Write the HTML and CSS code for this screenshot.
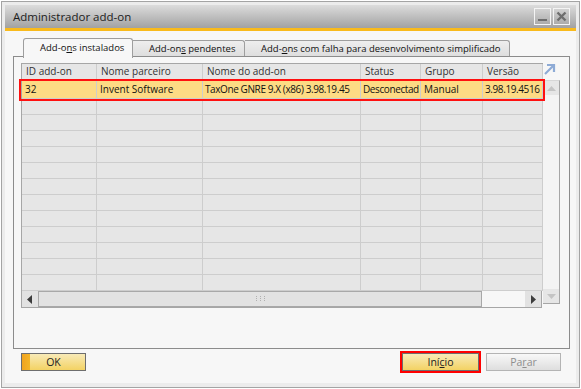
FILE: index.html
```html
<!DOCTYPE html>
<html lang="pt">
<head>
    <meta charset="UTF-8">
    <title>Administrador add-on</title>
    <link rel="stylesheet" href="styles.css">
</head>
<body>
    <div class="window">
        <div class="titlebar">
            <span class="title">Administrador add-on</span>
            <div class="win_btns">
                <span class="win_btn">
                    <svg width="15" height="15" viewBox="0 0 15 15"><rect x="3" y="10" width="9" height="2" fill="#6e6e6e"/></svg>
                </span>
                <span class="win_btn">
                    <svg width="15" height="15" viewBox="0 0 15 15"><path d="M3.5 3.5 L11.5 11.5 M11.5 3.5 L3.5 11.5" stroke="#6e6e6e" stroke-width="2.4"/></svg>
                </span>
            </div>
        </div>
        <div class="accent"></div>

        <div class="client">
            <div class="tabs">
                <div class="tab active tab_1">Add-o<u>n</u>s instalados</div>
                <div class="tab tab_2">Add-on<u>s</u> pendentes</div>
                <div class="tab tab_3">Add-<u>o</u>ns com falha para desenvolvimento simplificado</div>
            </div>

            <div class="panel">
                <div class="grid_box">
                    <div class="grid_left">
                        <div class="grid">
                            <div class="row head">
                                <span>ID add-on</span><span>Nome parceiro</span><span>Nome do add-on</span><span>Status</span><span>Grupo</span><span>Versão</span>
                            </div>
                            <div class="row first selected">
                                <span>32</span><span>Invent Software</span><span class="tight">TaxOne GNRE 9.X (x86) 3.98.19.45</span><span class="tight">Desconectad</span><span>Manual</span><span class="tight">3.98.19.4516</span>
                            </div>
                            <div class="row"><span></span><span></span><span></span><span></span><span></span><span></span></div>
                            <div class="row"><span></span><span></span><span></span><span></span><span></span><span></span></div>
                            <div class="row"><span></span><span></span><span></span><span></span><span></span><span></span></div>
                            <div class="row"><span></span><span></span><span></span><span></span><span></span><span></span></div>
                            <div class="row"><span></span><span></span><span></span><span></span><span></span><span></span></div>
                            <div class="row"><span></span><span></span><span></span><span></span><span></span><span></span></div>
                            <div class="row"><span></span><span></span><span></span><span></span><span></span><span></span></div>
                            <div class="row"><span></span><span></span><span></span><span></span><span></span><span></span></div>
                            <div class="row"><span></span><span></span><span></span><span></span><span></span><span></span></div>
                            <div class="row"><span></span><span></span><span></span><span></span><span></span><span></span></div>
                            <div class="row"><span></span><span></span><span></span><span></span><span></span><span></span></div>
                            <div class="row"><span></span><span></span><span></span><span></span><span></span><span></span></div>
                            <div class="mark"></div>
                        </div>
                        <div class="hscroll">
                            <span class="sb_btn"><svg width="6" height="9" viewBox="0 0 6 9"><path d="M5 0 L0 4.5 L5 9 Z" fill="#3c3c3c"/></svg></span>
                            <span class="hthumb">
                                <svg width="9" height="6" viewBox="0 0 9 6" class="grip"><g fill="#b0b0b0"><rect x="0" y="0" width="1" height="1"/><rect x="4" y="0" width="1" height="1"/><rect x="8" y="0" width="1" height="1"/><rect x="0" y="2" width="1" height="1"/><rect x="4" y="2" width="1" height="1"/><rect x="8" y="2" width="1" height="1"/><rect x="0" y="4" width="1" height="1"/><rect x="4" y="4" width="1" height="1"/><rect x="8" y="4" width="1" height="1"/></g></svg>
                            </span>
                            <span class="htrack"></span>
                            <span class="sb_btn"><svg width="6" height="9" viewBox="0 0 6 9"><path d="M1 0 L6 4.5 L1 9 Z" fill="#3c3c3c"/></svg></span>
                        </div>
                    </div>
                    <div class="grid_right">
                        <div class="corner">
                            <svg width="13" height="13" viewBox="0 0 13 13"><path d="M2 11 L11 2 M4 2 H11 V9" fill="none" stroke="#8eabd6" stroke-width="2.2"/></svg>
                        </div>
                        <div class="vscroll">
                            <span class="sb_btn v"><svg width="9" height="5" viewBox="0 0 9 5"><path d="M0 5 L4.5 0 L9 5 Z" fill="#c4c4c4"/></svg></span>
                            <span class="vtrack"></span>
                            <span class="sb_btn v"><svg width="9" height="5" viewBox="0 0 9 5"><path d="M0 0 L4.5 5 L9 0 Z" fill="#c4c4c4"/></svg></span>
                        </div>
                    </div>
                </div>
            </div>

            <div class="actions">
                <button class="btn btn_ok">OK</button>
                <span class="spacer"></span>
                <button class="btn btn_start">Iní<u>c</u>io</button>
                <button class="btn btn_off">Pa<u>r</u>ar</button>
            </div>
        </div>
    </div>
</body>
</html>
```

FILE: styles.css
```css
body {
    margin: 0;
    padding: 1px;
    background: #ffffff;
    font-family: "Open Sans", "Noto Sans", Arial, sans-serif;
    font-size: 10px;
    color: #111;
}

.window {
    width: 579px;
    height: 387px;
    box-sizing: border-box;
    border: 1px solid #a4a4a4;
    padding: 3px 3px 4px 3px;
    background: #ececec;
    display: flex;
    flex-direction: column;
}

.titlebar {
    height: 23px;
    display: flex;
    align-items: center;
    padding: 0 6px 0 8px;
    background: linear-gradient(#dcdcdc, #a2a2a2);
}

.title {
    flex: 1;
    font-size: 11.5px;
    color: #1c1c1c;
}

.win_btns {
    display: flex;
    gap: 2px;
}

.win_btn {
    width: 17px;
    height: 17px;
    box-sizing: border-box;
    border: 1px solid #f4f4f4;
    display: flex;
    align-items: center;
    justify-content: center;
}

.accent {
    height: 3px;
    background: #f9ba1c;
}

.client {
    flex: 1;
    background: #f7f7f7;
    padding: 7px 6px 0 8px;
    display: flex;
    flex-direction: column;
}

.tabs {
    display: flex;
    align-items: flex-end;
    margin-left: 10px;
    height: 18px;
    position: relative;
    z-index: 1;
}

.tab {
    height: 16px;
    box-sizing: border-box;
    border: 1px solid #9e9e9e;
    border-bottom: none;
    border-left: none;
    border-radius: 0 3px 0 0;
    background: linear-gradient(#eeeeee, #dedede);
    padding-left: 16px;
    font-size: 9.5px;
    line-height: 15px;
    white-space: nowrap;
}

.tab.active {
    height: 20px;
    border-left: 1px solid #9e9e9e;
    border-radius: 3px 3px 0 0;
    background: #f7f7f7;
    padding-left: 16px;
    line-height: 18px;
    margin-bottom: -2px;
}

.tab_1 {
    width: 110px;
}

.tab_2 {
    width: 112px;
}

.tab_3 {
    width: 265px;
}

.panel {
    height: 293px;
    box-sizing: border-box;
    border: 1px solid #8c8c8c;
    padding: 6px 8px 0 7px;
}

.grid_box {
    display: flex;
}

.grid {
    position: relative;
    width: 522px;
    box-sizing: border-box;
    border-left: 1px solid #a6a6a6;
    border-top: 1px solid #a6a6a6;
}

.row {
    display: grid;
    grid-template-columns: 75px 106px 158px 60px 62px 60px;
    height: 16px;
    background: #e6e6e6;
}

.row span {
    box-sizing: border-box;
    border-right: 1px solid #cdcdcd;
    border-bottom: 1px solid #cdcdcd;
    padding-left: 4px;
    line-height: 15px;
    white-space: nowrap;
    overflow: hidden;
}

.row.head {
    color: #333;
}

.row.first {
    height: 19px;
}

.row.first span {
    line-height: 19px;
    padding-left: 3px;
}

.row span.tight {
    letter-spacing: -0.4px;
    padding-left: 2px;
}

.row.selected {
    background: #fddb84;
}

.mark {
    position: absolute;
    left: -3px;
    top: 15px;
    width: 526px;
    height: 22px;
    border: 2px solid #ff1010;
    box-sizing: border-box;
}

.hscroll {
    display: flex;
    width: 521px;
    height: 17px;
    box-sizing: border-box;
    border: 1px solid #a6a6a6;
    border-top: none;
    background: #f7f7f7;
}

.sb_btn {
    width: 16px;
    background: #e2e2e2;
    display: flex;
    align-items: center;
    justify-content: center;
}

.hthumb {
    width: 444px;
    box-sizing: border-box;
    border: 1px solid #a8a8a8;
    background: #e2e2e2;
    display: flex;
    align-items: center;
    justify-content: center;
}

.htrack {
    flex: 1;
}

.grid_right {
    display: flex;
    flex-direction: column;
    width: 17px;
}

.corner {
    height: 17px;
    display: flex;
    align-items: flex-start;
    justify-content: flex-start;
}

.vscroll {
    height: 224px;
    box-sizing: border-box;
    border-right: 1px solid #a6a6a6;
    border-bottom: 1px solid #a6a6a6;
    border-top: 1px solid #d6d6d6;
    background: #f4f4f4;
    display: flex;
    flex-direction: column;
}

.sb_btn.v {
    width: auto;
    height: 14px;
    background: #e6e6e6;
}

.vtrack {
    flex: 1;
}

.actions {
    display: flex;
    align-items: center;
    padding: 0 9px 0 8px;
    margin-top: 4px;
}

.spacer {
    flex: 1;
}

.btn {
    height: 18px;
    box-sizing: border-box;
    border: 1px solid #6e6e6e;
    font-family: inherit;
    font-size: 10.5px;
    padding: 0;
    line-height: 15px;
    color: #222;
}

.btn_ok {
    width: 65px;
    background: linear-gradient(90deg, #f0a320 0, #f4b528 8px, transparent 8px), linear-gradient(#f8eab8, #f3d263);
}

.btn_start {
    width: 77px;
    background: linear-gradient(#f8eab8, #f3d263);
    outline: 2px solid #ff0000;
    margin-right: 7px;
}

.btn_off {
    width: 75px;
    border-color: #b4b4b4;
    background: linear-gradient(#f8f8f8, #dedede);
    color: #8e8e8e;
}
```
